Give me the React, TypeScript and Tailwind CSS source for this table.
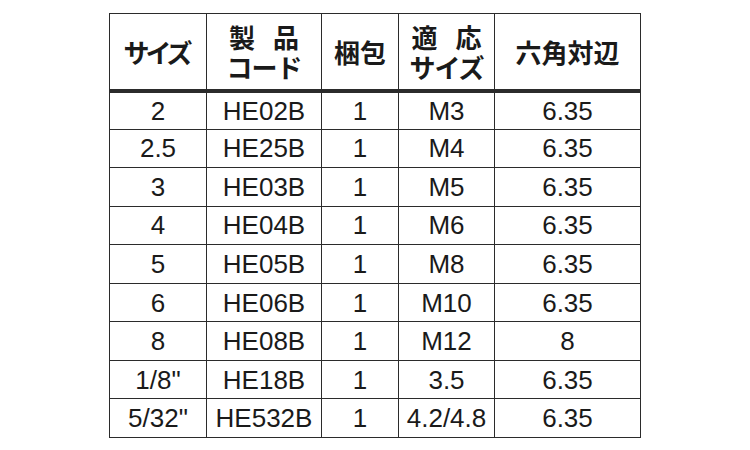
import React from 'react';

const rows: [string, string, string, string, string][] = [
  ['2', 'HE02B', '1', 'M3', '6.35'],
  ['2.5', 'HE25B', '1', 'M4', '6.35'],
  ['3', 'HE03B', '1', 'M5', '6.35'],
  ['4', 'HE04B', '1', 'M6', '6.35'],
  ['5', 'HE05B', '1', 'M8', '6.35'],
  ['6', 'HE06B', '1', 'M10', '6.35'],
  ['8', 'HE08B', '1', 'M12', '8'],
  ['1/8"', 'HE18B', '1', '3.5', '6.35'],
  ['5/32"', 'HE532B', '1', '4.2/4.8', '6.35'],
];

const th =
  'border-[1.5px] border-[#2b2b2b] border-b-[4px] border-b-double text-center align-middle font-bold text-[26px] leading-[29px]';
const td =
  'border-[1.5px] border-[#2b2b2b] text-center align-middle text-[26px] leading-none';

const jp = { fontFamily: '"Noto Sans CJK JP", sans-serif' };

export default function App() {
  return (
    <div className="w-[750px] h-[450px] bg-white flex justify-center pt-[13px] text-[#1a1a1a]">
      <table
        className="table-fixed border-collapse w-[531px] h-[425px]"
        style={{ fontFamily: '"Liberation Sans", "Noto Sans CJK JP", Arial, sans-serif' }}
      >
        <colgroup>
          <col className="w-[97px]" />
          <col className="w-[115px]" />
          <col className="w-[77px]" />
          <col className="w-[96px]" />
          <col className="w-[146px]" />
        </colgroup>
        <thead>
          <tr className="h-[77px]">
            <th className={th} style={jp}>
              <span className="tracking-[-4px] pr-1">サイズ</span>
            </th>
            <th className={th} style={jp}>
              <div className="tracking-[6px] pl-1.5 pb-px">製 品</div>
              <div className="tracking-[-1px]">コード</div>
            </th>
            <th className={th} style={jp}>
              梱包
            </th>
            <th className={th} style={jp}>
              <div className="tracking-[6px] pl-1.5 pb-px">適 応</div>
              <div className="tracking-[-1px]">サイズ</div>
            </th>
            <th className={th} style={jp}>
              六角対辺
            </th>
          </tr>
        </thead>
        <tbody>
          {rows.map((r, i) => (
            <tr key={i} className="h-[38.4px]">
              {r.map((c, j) => (
                <td key={j} className={td}>
                  {c}
                </td>
              ))}
            </tr>
          ))}
        </tbody>
      </table>
    </div>
  );
}
